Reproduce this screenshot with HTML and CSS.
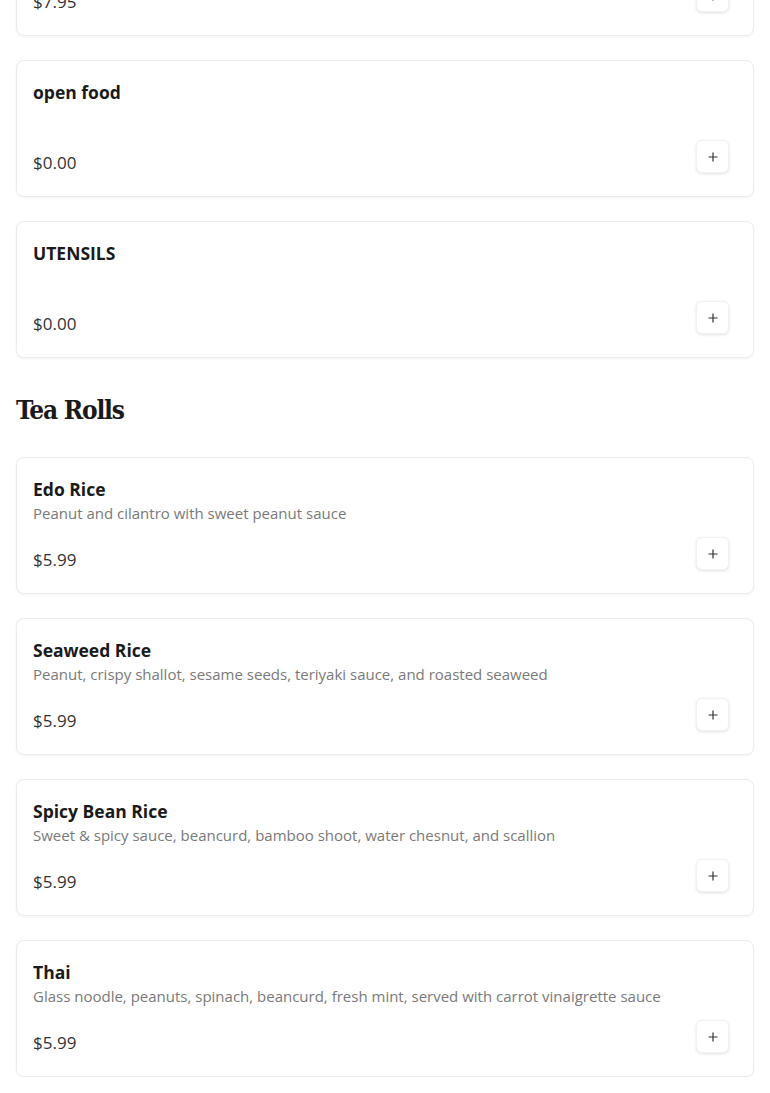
FILE: index.html
```html
<!DOCTYPE html>
<html>
<head>
<meta charset="utf-8">
<link rel="stylesheet" href="styles.css">
</head>
<body>
<main class="menu">
  <div class="list">
    <article class="card">
      <h3 class="title">Miso Soup</h3>
      <p class="desc">&nbsp;</p>
      <div class="row"><span class="price">$7.95</span><button class="add" aria-label="Add"><svg viewBox="0 0 10 10" width="10" height="10"><path d="M5 0.5V9.5M0.5 5H9.5" stroke="#333" stroke-width="1.2" fill="none"/></svg></button></div>
    </article>
    <article class="card">
      <h3 class="title">open food</h3>
      <p class="desc">&nbsp;</p>
      <div class="row"><span class="price">$0.00</span><button class="add" aria-label="Add"><svg viewBox="0 0 10 10" width="10" height="10"><path d="M5 0.5V9.5M0.5 5H9.5" stroke="#333" stroke-width="1.2" fill="none"/></svg></button></div>
    </article>
    <article class="card">
      <h3 class="title">UTENSILS</h3>
      <p class="desc">&nbsp;</p>
      <div class="row"><span class="price">$0.00</span><button class="add" aria-label="Add"><svg viewBox="0 0 10 10" width="10" height="10"><path d="M5 0.5V9.5M0.5 5H9.5" stroke="#333" stroke-width="1.2" fill="none"/></svg></button></div>
    </article>
  </div>
  <h2 class="section">Tea Rolls</h2>
  <div class="list">
    <article class="card">
      <h3 class="title">Edo Rice</h3>
      <p class="desc">Peanut and cilantro with sweet peanut sauce</p>
      <div class="row"><span class="price">$5.99</span><button class="add" aria-label="Add"><svg viewBox="0 0 10 10" width="10" height="10"><path d="M5 0.5V9.5M0.5 5H9.5" stroke="#333" stroke-width="1.2" fill="none"/></svg></button></div>
    </article>
    <article class="card">
      <h3 class="title">Seaweed Rice</h3>
      <p class="desc">Peanut, crispy shallot, sesame seeds, teriyaki sauce, and roasted seaweed</p>
      <div class="row"><span class="price">$5.99</span><button class="add" aria-label="Add"><svg viewBox="0 0 10 10" width="10" height="10"><path d="M5 0.5V9.5M0.5 5H9.5" stroke="#333" stroke-width="1.2" fill="none"/></svg></button></div>
    </article>
    <article class="card">
      <h3 class="title">Spicy Bean Rice</h3>
      <p class="desc">Sweet &amp; spicy sauce, beancurd, bamboo shoot, water chesnut, and scallion</p>
      <div class="row"><span class="price">$5.99</span><button class="add" aria-label="Add"><svg viewBox="0 0 10 10" width="10" height="10"><path d="M5 0.5V9.5M0.5 5H9.5" stroke="#333" stroke-width="1.2" fill="none"/></svg></button></div>
    </article>
    <article class="card">
      <h3 class="title">Thai</h3>
      <p class="desc">Glass noodle, peanuts, spinach, beancurd, fresh mint, served with carrot vinaigrette sauce</p>
      <div class="row"><span class="price">$5.99</span><button class="add" aria-label="Add"><svg viewBox="0 0 10 10" width="10" height="10"><path d="M5 0.5V9.5M0.5 5H9.5" stroke="#333" stroke-width="1.2" fill="none"/></svg></button></div>
    </article>
  </div>
</main>
</body>
</html>
```
FILE: styles.css
```css
html, body {
  margin: 0;
  padding: 0;
  background: #fff;
}
body {
  font-family: "Open Sans", "Liberation Sans", sans-serif;
  color: #1a1a1a;
  overflow: hidden;
}
.menu {
  padding: 0 16px;
  margin-top: -101px;
}
.list {
  display: flex;
  flex-direction: column;
  gap: 24px;
}
.card {
  border: 1px solid #ececec;
  border-radius: 8px;
  box-shadow: 0 1px 3px rgba(0, 0, 0, 0.05);
  padding: 19px 24px 21px 16px;
  background: #fff;
}
.title {
  margin: 0;
  font-size: 17.5px;
  font-weight: 700;
  line-height: 24px;
  color: #1a1a1a;
}
.desc {
  margin: 1px 0 0;
  font-size: 15px;
  line-height: 22px;
  color: #7a7a7a;
}
.row {
  margin-top: 24px;
  height: 24px;
  display: flex;
  justify-content: space-between;
  align-items: flex-end;
}
.price {
  font-size: 17px;
  line-height: 24px;
  color: #333;
}
.add {
  flex: none;
  width: 33px;
  height: 33px;
  margin-bottom: 2px;
  padding: 0;
  display: flex;
  align-items: center;
  justify-content: center;
  background: #fff;
  border: 1px solid #f2f2f2;
  border-radius: 6px;
  box-shadow: 0 1px 3px rgba(0, 0, 0, 0.12);
}
.section {
  margin: 36px 0 31px;
  font-family: "DejaVu Serif", "Liberation Serif", serif;
  font-weight: 900;
  font-stretch: condensed;
  font-size: 26px;
  line-height: 32px;
  letter-spacing: -1.2px;
  color: #1a1a1a;
}
```
